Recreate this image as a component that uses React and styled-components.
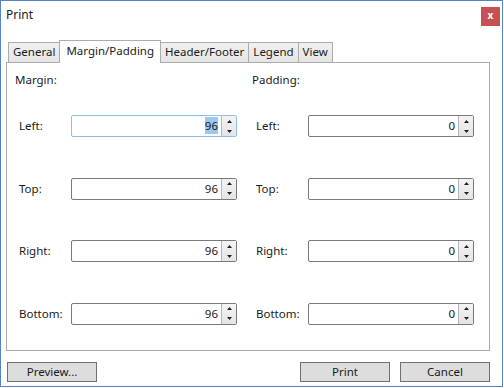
import React from "react";
import styled, { createGlobalStyle } from "styled-components";

const Global = createGlobalStyle`
  html, body { margin: 0; padding: 0; background: #ffffff; }
  body {
    font-family: "Segoe UI", "Noto Sans", "Liberation Sans", sans-serif;
    font-size: 11.5px;
    color: #1a1a1a;
  }
`;

const tabs = ["General", "Margin/Padding", "Header/Footer", "Legend", "View"];
const rows = ["Left", "Top", "Right", "Bottom"];

export default function App() {
  return (
    <>
      <Global />
      <Window>
        <TitleBar>
          <Title>Print</Title>
          <CloseButton>x</CloseButton>
        </TitleBar>
        <Body>
          <TabStrip>
            {tabs.map((t) => (
              <Tab key={t} active={t === "Margin/Padding"}>
                {t}
              </Tab>
            ))}
          </TabStrip>
          <Panel>
            <Column>
              <Heading>Margin:</Heading>
              <Fields>
                {rows.map((r, i) => (
                  <SpinRow key={r} label={r} value="96" focused={i === 0} />
                ))}
              </Fields>
            </Column>
            <Column>
              <Heading>Padding:</Heading>
              <Fields>
                {rows.map((r) => (
                  <SpinRow key={r} label={r} value="0" />
                ))}
              </Fields>
            </Column>
          </Panel>
          <Footer>
            <Button>Preview...</Button>
            <Spacer />
            <Button>Print</Button>
            <Button>Cancel</Button>
          </Footer>
        </Body>
      </Window>
    </>
  );
}

function SpinRow({ label, value, focused }) {
  return (
    <Row>
      <Label>{label}:</Label>
      <SpinBox focused={focused}>
        <Value>{focused ? <Selected>{value}</Selected> : value}</Value>
        <Spinner>
          <Arrow>
            <svg width="5" height="3" viewBox="0 0 5 3">
              <path d="M0 3 L2.5 0 L5 3 Z" fill="#222" />
            </svg>
          </Arrow>
          <Arrow>
            <svg width="5" height="3" viewBox="0 0 5 3">
              <path d="M0 0 L2.5 3 L5 0 Z" fill="#222" />
            </svg>
          </Arrow>
        </Spinner>
      </SpinBox>
    </Row>
  );
}

const Window = styled.div`
  width: 503px;
  height: 387px;
  box-sizing: border-box;
  border: 1px solid #5682c6;
  background: #ffffff;
  display: flex;
  flex-direction: column;
`;

const TitleBar = styled.div`
  height: 32px;
  display: flex;
  align-items: flex-start;
  justify-content: space-between;
  padding: 0 2px 0 5px;
`;

const Title = styled.div`
  margin-top: 6px;
  font-size: 12px;
  line-height: 16px;
`;

const CloseButton = styled.div`
  margin-top: 6px;
  width: 19px;
  height: 19px;
  background: #c75050;
  color: #ffffff;
  font-weight: bold;
  font-size: 10px;
  line-height: 17px;
  text-align: center;
`;

const Body = styled.div`
  flex: 1;
  display: flex;
  flex-direction: column;
  padding: 7px 12px 0 5px;
`;

const TabStrip = styled.div`
  display: flex;
  align-items: flex-end;
  padding-left: 3px;
  height: 23px;
  position: relative;
  z-index: 1;
  margin-bottom: -1px;
`;

const Tab = styled.div`
  box-sizing: border-box;
  height: ${({ active }) => (active ? "23px" : "21px")};
  padding: ${({ active }) => (active ? "2px 6px 0" : "1px 4px 0")};
  border: 1px solid #acacac;
  border-bottom: ${({ active }) => (active ? "none" : "1px solid #acacac")};
  margin-left: -1px;
  background: ${({ active }) =>
    active ? "#ffffff" : "linear-gradient(#f0f0f0, #e5e5e5)"};
  line-height: 16px;
  white-space: nowrap;
  position: relative;
  z-index: ${({ active }) => (active ? 2 : 1)};
`;

const Panel = styled.div`
  box-sizing: border-box;
  height: 289px;
  border: 1px solid #acacac;
  display: flex;
  padding: 9px 0 0 8px;
`;

const Column = styled.div`
  width: 239px;
  display: flex;
  flex-direction: column;
`;

const Heading = styled.div`
  line-height: 16px;
`;

const Fields = styled.div`
  display: flex;
  flex-direction: column;
  gap: 40.5px;
  margin-top: 27px;
  padding-left: 4px;
`;

const Row = styled.div`
  display: flex;
  align-items: center;
`;

const Label = styled.div`
  width: 52px;
  line-height: 16px;
`;

const SpinBox = styled.div`
  box-sizing: border-box;
  width: 166px;
  height: 22px;
  border: 1px solid ${({ focused }) => (focused ? "#8fbfe8" : "#7a7a7a")};
  border-radius: 2px;
  display: flex;
  background: #ffffff;
`;

const Value = styled.div`
  flex: 1;
  text-align: right;
  padding-right: 3px;
  line-height: 20px;
`;

const Selected = styled.span`
  background: #99c9ef;
  padding: 1px 0;
`;

const Spinner = styled.div`
  width: 14px;
  border-left: 1px solid #b5b5b5;
  display: flex;
  flex-direction: column;
  background: linear-gradient(#f4f4f4, #e4e4e4);
`;

const Arrow = styled.div`
  flex: 1;
  display: flex;
  align-items: center;
  justify-content: center;
`;

const Footer = styled.div`
  display: flex;
  gap: 10px;
  margin-top: 11px;
  padding-left: 1px;
`;

const Spacer = styled.div`
  flex: 1;
`;

const Button = styled.div`
  box-sizing: border-box;
  width: 90px;
  height: 20px;
  border: 1px solid #707070;
  background: #dddddd;
  text-align: center;
  line-height: 17px;
`;
